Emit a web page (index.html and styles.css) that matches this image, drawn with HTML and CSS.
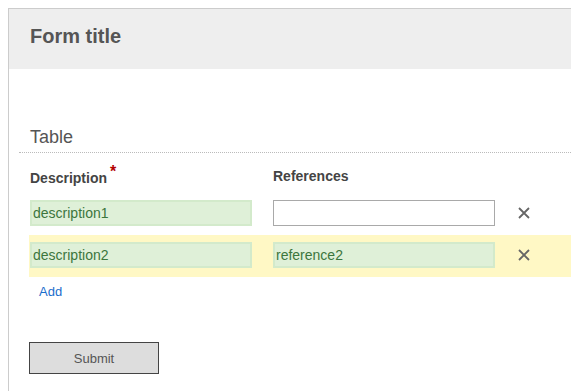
FILE: index.html
```html
<!DOCTYPE html>
<html lang="en">
<head>
  <meta charset="UTF-8">
  <meta name="viewport" content="width=device-width, initial-scale=1">
  <title>Form title</title>
  <link rel="stylesheet" href="styles.css">
</head>
<body>
  <div class="panel">
    <div class="panel-header">
      <h2>Form title</h2>
    </div>
    <div class="panel-body">
      <h3 class="section-title">Table</h3>
      <div class="table">
        <div class="table-head">
          <div class="cell-desc label-required">Description<sup class="required">*</sup></div>
          <div class="cell-ref">References</div>
        </div>
        <div class="table-row">
          <input class="field valid cell-desc" type="text" value="description1">
          <input class="field cell-ref" type="text" value="">
          <button class="cell-remove" type="button" title="Remove">
            <svg width="12" height="12" viewBox="0 0 12 12"><path d="M1 1L11 11M11 1L1 11" stroke="#666" stroke-width="1.8" fill="none"/></svg>
          </button>
        </div>
        <div class="table-row highlight">
          <input class="field valid cell-desc" type="text" value="description2">
          <input class="field valid cell-ref" type="text" value="reference2">
          <button class="cell-remove" type="button" title="Remove">
            <svg width="12" height="12" viewBox="0 0 12 12"><path d="M1 1L11 11M11 1L1 11" stroke="#666" stroke-width="1.8" fill="none"/></svg>
          </button>
        </div>
        <a class="add-link" href="#">Add</a>
      </div>
      <button class="submit-btn" type="submit">Submit</button>
    </div>
  </div>
</body>
</html>
```

FILE: styles.css
```css
html {
  overflow: hidden;
}
body {
  margin: 8px 0 0 8px;
  font-family: "Liberation Sans", Arial, sans-serif;
  color: #555;
  background-color: #fff;
}
.panel {
  box-sizing: border-box;
  min-height: calc(100vh - 8px);
  border-top: 1px solid #ccc;
  border-left: 1px solid #ccc;
}
.panel-header {
  background-color: #eee;
  padding: 16px 21px 21px;
}
.panel-header h2 {
  margin: 0;
  font-size: 20px;
  line-height: 23px;
  font-weight: bold;
  color: #555;
}
.panel-body {
  padding-left: 10px;
}
.section-title {
  margin: 58px 0 0;
  padding: 0 0 4px 11px;
  font-size: 18px;
  line-height: 21px;
  font-weight: normal;
  color: #555;
  border-bottom: 1px dotted #bbb;
}
.table {
  margin-left: 10px;
}
.table-head {
  display: flex;
  align-items: flex-start;
  height: 25px;
  margin-top: 15px;
  padding-left: 1px;
  font-size: 14px;
  line-height: 16px;
  font-weight: bold;
  color: #444;
}
.label-required {
  padding-top: 2px;
}
.required {
  color: #b30000;
  font-size: 16px;
  line-height: 0;
  margin-left: 3px;
}
.table-row {
  display: flex;
  align-items: center;
  padding: 7px 0 9px 1px;
}
.table-row.highlight {
  background-color: #fff8c5;
}
.field {
  box-sizing: border-box;
  height: 26px;
  padding: 0 1px;
  font-family: "Liberation Sans", Arial, sans-serif;
  font-size: 14px;
  color: #333;
  background-color: #fff;
  border: 1px solid #a9a9a9;
  border-radius: 0;
}
.field.valid {
  background-color: #dff0d8;
  border: 2px solid #d3eacb;
  color: #3c763d;
}
.cell-desc {
  width: 222px;
  margin: 0;
}
.cell-ref {
  width: 222px;
  margin: 0 0 0 21px;
}
.cell-remove {
  margin-left: 23px;
  padding: 0;
  border: none;
  background: none;
  width: 12px;
  height: 12px;
  display: flex;
  cursor: pointer;
}
.add-link {
  display: block;
  margin: 7px 0 0 10px;
  font-size: 13px;
  line-height: 15px;
  color: #1a6dcc;
  text-decoration: none;
}
.submit-btn {
  display: block;
  width: 130px;
  height: 32px;
  margin: 43px 0 0 10px;
  background-color: #ddd;
  border: 1px solid #444;
  font-family: "Liberation Sans", Arial, sans-serif;
  font-size: 13px;
  color: #555;
  cursor: pointer;
}
```
